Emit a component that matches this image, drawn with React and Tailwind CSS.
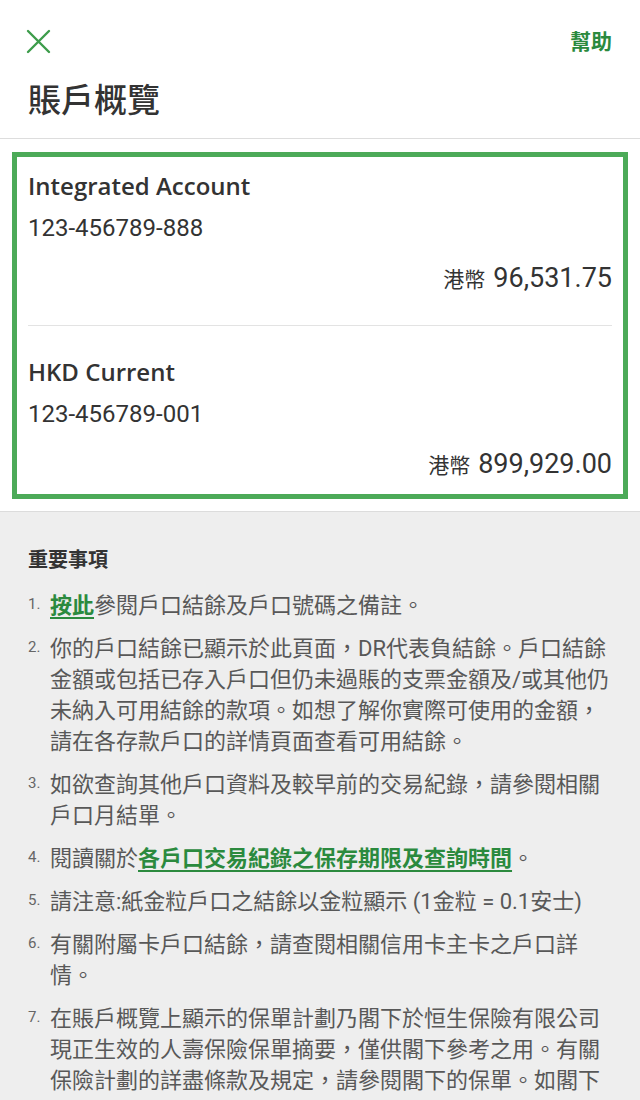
const accounts = [
  { name: 'Integrated Account', number: '123-456789-888', amount: '96,531.75', pad: 'pt-[13px] pb-[29px]' },
  { name: 'HKD Current', number: '123-456789-001', amount: '899,929.00', pad: 'pt-[30px] pb-[12px]' },
]

function CloseIcon() {
  return (
    <svg width="26" height="26" viewBox="0 0 26 26" fill="none">
      <path d="M3 3L24 24M24 3L3 24" stroke="#3d9c4b" strokeWidth="2.4" strokeLinecap="round" />
    </svg>
  )
}

function Link({ children }) {
  return <a href="#" className="text-[#2b8a3e] font-bold underline underline-offset-4 decoration-2">{children}</a>
}

const notes = [
  <>
    <Link>按此</Link>參閱戶口結餘及戶口號碼之備註。
  </>,
  '你的戶口結餘已顯示於此頁面，DR代表負結餘。戶口結餘金額或包括已存入戶口但仍未過賬的支票金額及/或其他仍未納入可用結餘的款項。如想了解你實際可使用的金額，請在各存款戶口的詳情頁面查看可用結餘。',
  '如欲查詢其他戶口資料及較早前的交易紀錄，請參閱相關戶口月結單。',
  <>
    閱讀關於<Link>各戶口交易紀錄之保存期限及查詢時間</Link>。
  </>,
  '請注意:紙金粒戶口之結餘以金粒顯示 (1金粒 = 0.1安士)',
  '有關附屬卡戶口結餘，請查閱相關信用卡主卡之戶口詳情。',
  '在賬戶概覽上顯示的保單計劃乃閣下於恒生保險有限公司現正生效的人壽保險保單摘要，僅供閣下參考之用。有關保險計劃的詳盡條款及規定，請參閱閣下的保單。如閣下對保單有任何查詢，請聯絡恒生保險有限公司。',
]

export default function App() {
  return (
    <div className="w-[640px] min-h-[1100px] bg-[#eeeeee] font-['Roboto','Noto_Sans_CJK_TC',sans-serif]">
      <div className="bg-white">
        <div className="flex items-center justify-between pl-[25px] pr-[28px] pt-[25px]">
          <button className="w-[26px] h-[26px]">
            <CloseIcon />
          </button>
          <span className="text-[21px] font-bold text-[#2b8a3e] font-['Noto_Sans_CJK_TC',sans-serif]">幫助</span>
        </div>
        <h1 className="px-[28px] pt-[19px] pb-[18px] text-[33px] leading-[44px] font-medium text-[#333333] font-['Noto_Sans_CJK_TC',sans-serif]">
          賬戶概覽
        </h1>
        <div className="border-t border-[#dddddd] px-[12px] pt-[13px] pb-[12px]">
          <div className="border-[5px] border-[#4caa58] bg-white px-[11px]">
            {accounts.map((a, i) => (
              <div key={a.number} className={`${a.pad} ${i > 0 ? 'border-t border-[#e3e3e3]' : ''}`}>
                <div className="font-['Open_Sans',sans-serif] font-semibold text-[24px] leading-[32px] text-[#333333]">
                  {a.name}
                </div>
                <div className="mt-[10px] text-[24px] leading-[32px] text-[#333333]">{a.number}</div>
                <div className="mt-[16px] flex items-baseline justify-end gap-[8px] text-[#333333]">
                  <span className="text-[21px] font-['Noto_Sans_CJK_TC',sans-serif]">港幣</span>
                  <span className="text-[27px] leading-[36px]">{a.amount}</span>
                </div>
              </div>
            ))}
          </div>
        </div>
      </div>
      <div className="border-t border-[#dcdcdc] px-[28px] pt-[32px] pb-[40px]">
        <h2 className="text-[20px] leading-[30px] font-bold text-[#333333] font-['Noto_Sans_CJK_TC',sans-serif]">重要事項</h2>
        <ol className="mt-[16px] flex flex-col gap-[12px]">
          {notes.map((n, i) => (
            <li key={i} className="flex">
              <span className="w-[22px] shrink-0 text-[15px] leading-[28px] text-[#666666]">{i + 1}.</span>
              <span className="flex-1 text-[22px] leading-[31px] text-[#585858]">{n}</span>
            </li>
          ))}
        </ol>
      </div>
    </div>
  )
}
